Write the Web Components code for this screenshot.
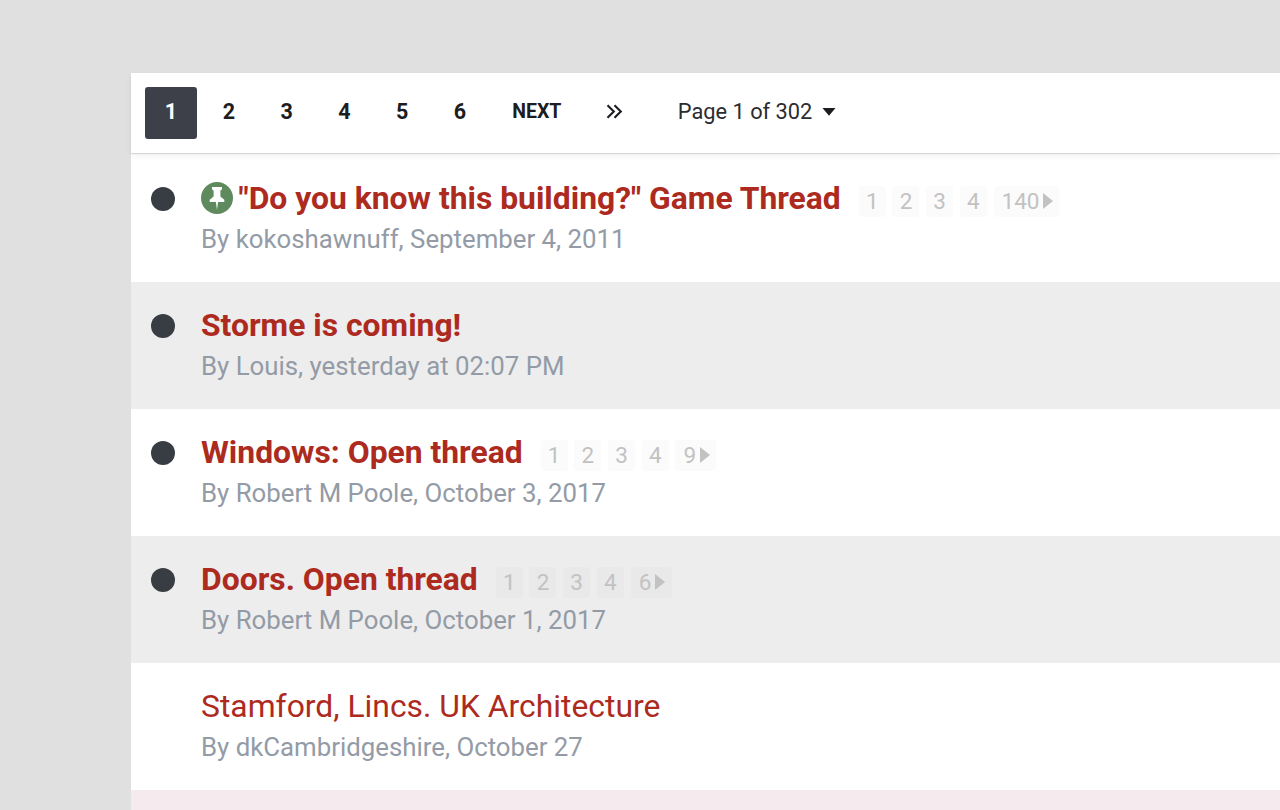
<!DOCTYPE html>
<html>
<head>
<meta charset="utf-8">
<title>Forum</title>
<style>
   html, body { margin: 0; height: 100%; overflow: hidden; }
   body { background: #e0e0e0; font-family: Roboto, "Liberation Sans", sans-serif; padding: 73px 0 0 131px; box-sizing: border-box; }
   topic-list { width: 1149px; }
</style>
</head>
<body>
<topic-list>
   <page-bar slot="bar" current="1" pages="2,3,4,5,6" total="302"></page-bar>
   <topic-row pinned unread pages="1,2,3,4" last="140" author="kokoshawnuff" date="September 4, 2011">"Do you know this building?" Game Thread</topic-row>
   <topic-row alt unread author="Louis" date="yesterday at 02:07 PM">Storme is coming!</topic-row>
   <topic-row unread pages="1,2,3,4" last="9" author="Robert M Poole" date="October 3, 2017">Windows: Open thread</topic-row>
   <topic-row alt unread pages="1,2,3,4" last="6" author="Robert M Poole" date="October 1, 2017">Doors. Open thread</topic-row>
   <topic-row author="dkCambridgeshire" date="October 27">Stamford, Lincs. UK Architecture</topic-row>
   <topic-row hidden-row></topic-row>
</topic-list>

<script>
class TopicList extends HTMLElement {
   constructor() { super();
      this.attachShadow( {mode: 'open'} ).innerHTML = `
         <style>
            :host { display: flex; flex-direction: column; background: #fff; }
         </style>
         <slot name="bar"></slot>
         <slot></slot>`;
   }
}

class PageBar extends HTMLElement {
   constructor() { super();
      const pages = this.getAttribute( 'pages' ).split( ',' );
      const links = pages.map( p => `<a class="num">${p}</a>` ).join( '' );
      this.attachShadow( {mode: 'open'} ).innerHTML = `
         <style>
            :host { display: flex; align-items: center; height: 80px; padding-left: 14px; box-sizing: border-box;
               background: #fff; box-shadow: 0 1px 1px rgba(0,0,0,.13), 0 3px 7px rgba(0,0,0,.05); position: relative; margin-bottom: 2px;
               color: #1c1d20; font-size: 21.5px; font-weight: 700; }
            a { display: flex; align-items: center; justify-content: center; height: 52px; padding-bottom: 3px; box-sizing: border-box; }
            .num { width: 52px; margin-right: 5.8px; border-radius: 3px; }
            .on { background: #3d4049; color: #fff; }
            .next { font-size: 19.5px; margin-left: 20px; width: 50px; }
            .last { width: 18px; margin-left: 43px; }
            .jump { margin-left: 55px; font-weight: 400; font-size: 21.8px; color: #2b2c30; display: flex; align-items: center; padding-bottom: 3px; }
            .jump svg { margin-left: 10px; }
         </style>
         <a class="num on">${this.getAttribute( 'current' )}</a>${links}
         <a class="next">NEXT</a>
         <a class="last"><svg width="18" height="15" viewBox="0 0 18 15" fill="none" stroke="#1c1d20" stroke-width="2.1"><path d="M2.5 1.2 8.8 7.5 2.5 13.8M9.5 1.2 15.8 7.5 9.5 13.8"/></svg></a>
         <span class="jump">Page 1 of ${this.getAttribute( 'total' )}<svg width="14" height="8" viewBox="0 0 14 8"><path d="M.5 0h13L7 7.8z" fill="#1c1d20"/></svg></span>`;
   }
}

class TopicRow extends HTMLElement {
   constructor() { super();
      const pages = ( this.getAttribute( 'pages' ) || '' ).split( ',' ).filter( Boolean );
      const last = this.getAttribute( 'last' );
      const pager = pages.length ? `<span class="pager">${ pages.map( p => `<i>${p}</i>` ).join( '' ) }<i class="end">${last}<b></b></i></span>` : '';
      const pin = this.hasAttribute( 'pinned' ) ? `<span class="pin"><svg width="16" height="23" viewBox="0 0 16 23" fill="#fff"><path d="M3 0h10v2.6l-1.6.9v6l3.9 3.2V15H9.1L8 23 6.9 15H.7v-2.3l3.9-3.2v-6L3 2.6z"/></svg></span>` : '';
      const dot = this.hasAttribute( 'unread' ) ? '<span class="dot"></span>' : '';
      const meta = this.hasAttribute( 'author' ) ? `By ${this.getAttribute( 'author' )}, ${this.getAttribute( 'date' )}` : '';
      this.attachShadow( {mode: 'open'} ).innerHTML = `
         <style>
            :host { display: flex; height: 127px; box-sizing: border-box; background: #fff; }
            :host([alt]) { background: #ededed; }
            :host([hidden-row]) { background: #f5ebef; }
            .mark { width: 70px; flex: none; padding: 32px 0 0 20px; box-sizing: border-box; }
            .dot { display: block; width: 24px; height: 24px; border-radius: 50%; background: #383d44; }
            .body { padding-top: 20.5px; }
            .head { display: flex; align-items: center; height: 44px; }
            .title { font-size: 31.85px; color: #ad2a1f; font-weight: 400; }
            :host([unread]) .title { font-weight: 700; }
            .pin { width: 32px; height: 32px; border-radius: 50%; background: #5f8a5e; display: flex; align-items: center; justify-content: center; margin-right: 5.5px; margin-top: 1px; }
            .pager { display: flex; gap: 6.7px; margin-left: 18px; margin-top: 7px; }
            i { font-style: normal; font-size: 22.5px; color: #c2c2c2; min-width: 27px; height: 31px; display: flex; align-items: center; justify-content: center; background: rgba(0,0,0,.014); border-radius: 3px; }
            .end { padding: 0 6px 0 8px; }
            b { width: 0; height: 0; border-left: 10px solid #c2c2c2; border-top: 8.5px solid transparent; border-bottom: 8.5px solid transparent; margin-left: 4px; }
            .meta { font-size: 25.8px; color: #939ba6; margin-top: 3.5px; line-height: 32px; }
         </style>
         <div class="mark">${dot}</div>
         <div class="body">
            <div class="head">${pin}<span class="title"><slot></slot></span>${pager}</div>
            <div class="meta">${meta}</div>
         </div>`;
   }
}

customElements.define( 'topic-list', TopicList );
customElements.define( 'page-bar', PageBar );
customElements.define( 'topic-row', TopicRow );
</script>
</body>
</html>
